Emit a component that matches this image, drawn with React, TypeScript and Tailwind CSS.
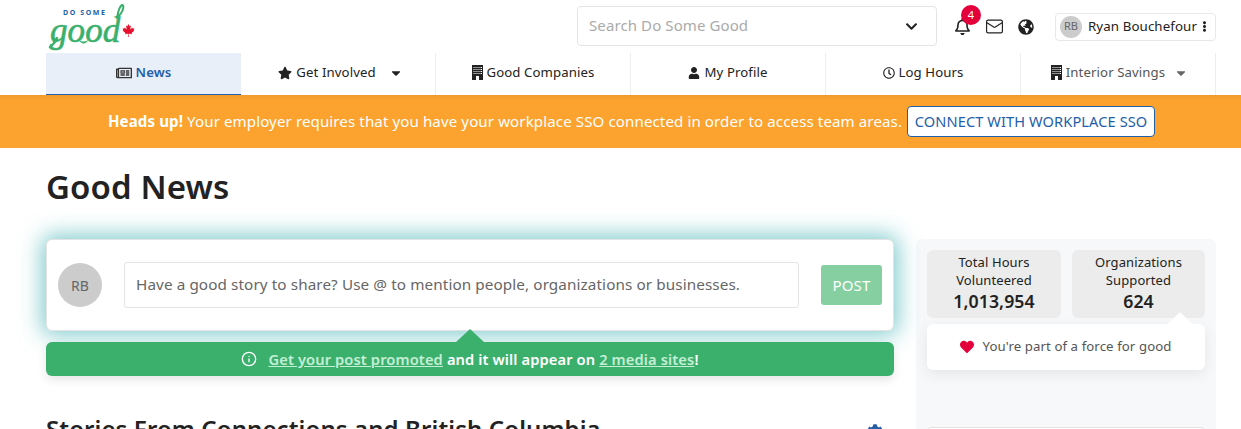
import React from 'react';
import { FaRegBell, FaGlobeAmericas, FaChevronDown, FaEllipsisV, FaHeart, FaStar, FaUser, FaRegClock, FaRegNewspaper, FaCaretDown, FaCanadianMapleLeaf, FaCog } from 'react-icons/fa';
import { Info, Mail } from 'lucide-react';

function BuildingIcon() {
  return (
    <svg width="11" height="15" viewBox="0 0 11 15" className="shrink-0">
      <rect width="11" height="15" fill="#222" />
      {[2, 4, 6, 8].map((y) =>
        [1.5, 3.5, 5.5, 7.5, 9].map((x) => <rect key={`${x}-${y}`} x={x} y={y} width="1" height="1" fill="#fff" />)
      )}
      <rect x="4" y="11" width="3" height="4" fill="#fff" />
    </svg>
  );
}

interface TabProps {
  icon: React.ReactNode;
  label: string;
  caretClass?: string;
  muted?: boolean;
  pad?: string;
}

function NavTab({ icon, label, caretClass, muted, pad }: TabProps) {
  return (
    <div className={`w-[195px] h-[42px] pb-[3px] flex items-center justify-center border-r border-[#eeeeee] text-[13.2px] ${pad ?? ''} ${muted ? 'text-[#555]' : 'text-[#222]'}`}>
      {icon}
      <span className="ml-1">{label}</span>
      {caretClass && <FaCaretDown className={caretClass} />}
    </div>
  );
}

export default function App() {
  return (
    <div className="h-[429px] w-[1241px] overflow-hidden bg-white text-[#222] tracking-[0.1px] font-['Noto_Sans',sans-serif]">
      {/* top bar */}
      <div className="h-[53px] pl-[46px] pr-[25px] flex items-center">
        <div className="w-[92px] h-[53px] relative shrink-0">
          <span className="absolute left-[17px] top-[9px] text-[7px] leading-[7px] font-bold tracking-[1.6px] text-[#235ea8]">DO SOME</span>
          <span className="absolute left-[4px] top-[18px] text-[35px] leading-[26px] italic text-[#3bb06d] font-['Liberation_Serif',serif] [-webkit-text-stroke:0.6px_#3bb06d]">good</span>
          <svg width="92" height="53" viewBox="0 0 92 53" className="absolute left-0 top-0">
            <path d="M71 18C72 12 74 6 76 5c1.500-.5 1.500 2 1 4-.5 2-3 6-6 9" fill="none" stroke="#3bb06d" strokeWidth="2" strokeLinecap="round" />
            <path d="M11 38c-2 4-4 7-7 9" fill="none" stroke="#3bb06d" strokeWidth="2.5" strokeLinecap="round" />
            <path d="M33 40c3 2 6 2 9 0-1 4-7 5-9 0z" fill="#3bb06d" />
          </svg>
          <FaCanadianMapleLeaf className="absolute left-[76px] top-[24px] text-[13px] text-[#e8112d]" />
        </div>
        <div className="ml-[439px] w-[360px] h-[40px] -mt-[1px] pb-[2px] border border-[#e4e4e4] rounded-[4px] flex items-center justify-between pl-[11px] pr-[18px] text-[15px] text-[#aaa]">
          <span>Search Do Some Good</span>
          <FaChevronDown className="text-[13px] text-[#222] mt-[2px]" />
        </div>
        <div className="relative ml-[17px] w-[16px]">
          <FaRegBell className="text-[17px] text-[#222]" />
          <span className="absolute left-[7px] -top-[13px] w-[20px] h-[20px] rounded-full bg-[#e4003a] text-white text-[11px] flex items-center justify-center">4</span>
        </div>
        <Mail size={19} strokeWidth={1.5} className="ml-[15px] text-[#222]" />
        <FaGlobeAmericas className="ml-[14px] text-[16px] text-[#222]" />
        <div className="ml-[21px] w-[161px] h-[28px] border border-[#e8e8e8] rounded-[4px] flex items-center pl-[4px] text-[13.3px]">
          <span className="w-[22px] h-[22px] rounded-full bg-[#cccccc] text-[#666] text-[11px] flex items-center justify-center">RB</span>
          <span className="ml-[6px] whitespace-nowrap">Ryan Bouchefour</span>
          <FaEllipsisV className="ml-[2px] text-[11px]" />
        </div>
      </div>

      {/* nav */}
      <div className="pl-[46px] flex h-[42px]">
        <div className="w-[195px] h-[42px] pb-[2px] flex items-center justify-center bg-[#e8eff9] border-b border-[#235ea8] text-[13.2px] font-semibold text-[#235ea8]">
          <FaRegNewspaper className="text-[#333] text-[16px] mr-[4px]" />
          News
        </div>
        <NavTab icon={<FaStar className="text-[14px]" />} label="Get Involved" caretClass="ml-[13px] text-[14px] mt-[1px] text-[#222]" pad="pl-[5px]" />
        <NavTab icon={<BuildingIcon />} label="Good Companies" />
        <NavTab icon={<FaUser className="text-[12px]" />} label="My Profile" />
        <NavTab icon={<FaRegClock className="text-[12px]" />} label="Log Hours" />
        <NavTab icon={<BuildingIcon />} label="Interior Savings" caretClass="ml-[9px] text-[14px] mt-[1px] text-[#666]" pad="pl-[3px]" muted />
      </div>

      {/* sso banner */}
      <div className="h-[53px] bg-[#fba32e] shadow-[inset_0_4px_4px_-3px_rgba(0,0,0,0.08)] pl-[22px] flex items-center justify-center text-white text-[15.1px]">
        <span className="font-bold">Heads up!</span>
        <span className="ml-1">Your employer requires that you have your workplace SSO connected in order to access team areas.</span>
        <button className="ml-[5px] w-[248px] h-[31px] bg-white border border-[#235ea8] rounded-[4px] text-[#235ea8] text-[14.6px]">CONNECT WITH WORKPLACE SSO</button>
      </div>

      {/* page */}
      <div className="pl-[46px] pr-[25px]">
        <h1 className="mt-[16px] h-[46px] text-[33px] leading-[46px] font-semibold text-[#222]">Good News</h1>
        <div className="mt-[29px] flex gap-[22px]">
          <div className="w-[848px] shrink-0">
            <div className="relative h-[92px] bg-white border border-[#e4e4e4] rounded-[6px] shadow-[0_0_22px_4px_rgba(60,175,180,0.65)] flex items-center pl-[11px] pr-[11px]">
              <span className="w-[44px] h-[44px] rounded-full bg-[#cccccc] text-[#666] text-[14px] flex items-center justify-center shrink-0">RB</span>
              <div className="ml-[22px] w-[675px] h-[46px] pb-[2px] border border-[#e4e4e4] rounded-[3px] flex items-center pl-[11px] text-[15.25px] text-[#666] whitespace-nowrap">
                Have a good story to share? Use @ to mention people, organizations or businesses.
              </div>
              <button className="ml-[22px] w-[61px] h-[40px] bg-[#85cfa1] rounded-[3px] text-white text-[15px]">POST</button>
            </div>
            <div className="relative mt-[11px] h-[34px] bg-[#3bb06d] rounded-[6px] shadow-[0_4px_10px_rgba(0,0,0,0.1)] flex items-center justify-center text-[14.7px] font-semibold text-white">
              <span className="absolute left-[410px] -top-[13px] w-0 h-0 border-x-[14px] border-x-transparent border-b-[13px] border-b-[#3bb06d]" />
              <Info size={16} className="mr-[11px]" />
              <span className="underline text-[#c4eed5]">Get your post promoted</span>
              <span className="ml-1">and it will appear on</span>
              <span className="ml-1 underline text-[#c4eed5]">2 media sites</span>!
            </div>
            <div className="mt-[37px] flex justify-between items-start pr-[11px]">
              <h2 className="text-[24px] leading-[32px] font-semibold">Stories From Connections and British Columbia</h2>
              <FaCog className="mt-[11px] text-[16px] text-[#235ea8]" />
            </div>
          </div>

          {/* sidebar */}
          <div className="w-[300px] h-[200px] bg-[#f7f8fa] rounded-[6px] pt-[11px] px-[11px]">
            <div className="flex gap-[11px] text-center text-[13px] leading-[18px]">
              <div className="w-[134px] h-[68px] bg-[#ececec] rounded-[6px] pt-[3px]">
                <div>Total Hours</div>
                <div>Volunteered</div>
                <div className="text-[17.7px] leading-[24px] font-semibold">1,013,954</div>
              </div>
              <div className="w-[133px] h-[68px] bg-[#ececec] rounded-[6px] pt-[3px]">
                <div>Organizations</div>
                <div>Supported</div>
                <div className="text-[17.7px] leading-[24px] font-semibold">624</div>
              </div>
            </div>
            <div className="relative mt-[6px] h-[46px] w-[278px] bg-white rounded-[6px] shadow-[0_4px_14px_rgba(0,0,0,0.08)] flex items-center justify-center text-[13.2px] text-[#555]">
              <span className="absolute left-[241px] -top-[12px] w-0 h-0 border-x-[12px] border-x-transparent border-b-[12px] border-b-white" />
              <FaHeart className="text-[14px] text-[#e4003a] mr-[8px]" />
              You're part of a force for good
            </div>
            <div className="mt-[57px] h-[20px] w-[278px] bg-white border border-[#e4e4e4] rounded-[4px]" />
          </div>
        </div>
      </div>
    </div>
  );
}
